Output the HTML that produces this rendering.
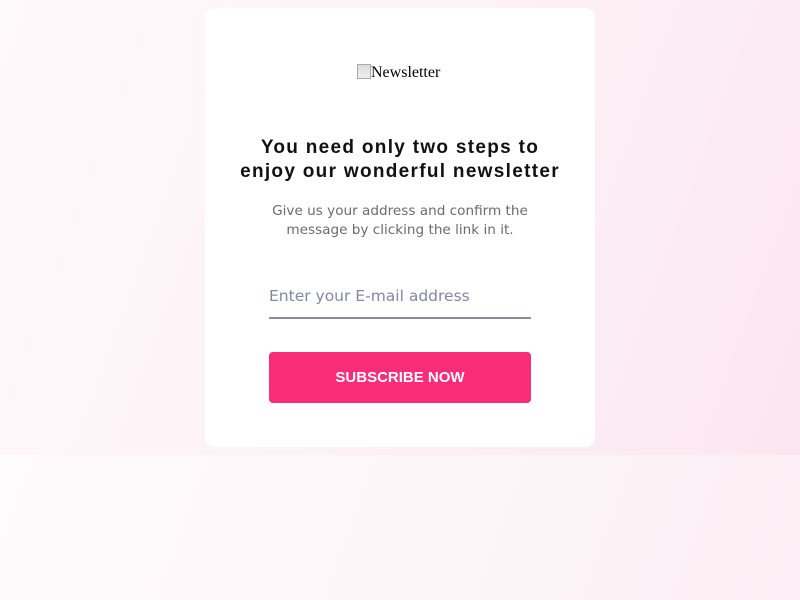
<!DOCTYPE html>
<html><head><meta charset="utf-8"><style>
html,body{margin:0;padding:0;width:800px;height:600px;overflow:hidden;background:#fdf6f9;font-family:"Liberation Sans",sans-serif}
.sec{position:absolute;left:0;top:0;width:800px;height:455px;background:linear-gradient(110deg,#fef9fb 0%,#fdf0f5 60%,#fbe6f0 100%)}
.low{position:absolute;left:0;top:455px;width:800px;height:145px;background:linear-gradient(110deg,#fefbfc 0%,#fdf5f8 60%,#fbeef4 100%)}
.card{position:absolute;left:205px;top:8px;width:390px;height:439px;background:#fff;border-radius:10px}
.img{position:absolute;left:152px;top:56px;font-family:"Liberation Serif",serif;font-size:16px;color:#000}
.img i{display:inline-block;width:14px;height:15px;vertical-align:-2px;background:linear-gradient(#ddd,#eee);border:1px solid #aaa;box-sizing:border-box}
h1{position:absolute;left:0;top:128px;width:390px;margin:0;text-align:center;font-size:19px;font-weight:bold;line-height:24px;letter-spacing:1.3px;color:#111}
p{position:absolute;left:0;top:194px;width:390px;margin:0;text-align:center;font-family:"DejaVu Sans",sans-serif;font-size:13.6px;line-height:19px;color:#6a6a72}
.in{position:absolute;left:64px;top:279px;width:262px;height:30px;border-bottom:2px solid #8a8aa0;font-family:"DejaVu Sans",sans-serif;font-size:15.5px;color:#8388a0}
.btn{position:absolute;left:64px;top:344px;width:262px;height:51px;background:#f92c7a;border-radius:4px;color:#fff;font-weight:bold;font-size:15px;text-align:center;line-height:51px}
</style></head><body>
<div class="sec"></div><div class="low"></div>
<div class="card">
<div class="img"><i></i>Newsletter</div>
<h1>You need only two steps to<br>enjoy our wonderful newsletter</h1>
<p>Give us your address and confirm the<br>message by clicking the link in it.</p>
<div class="in">Enter your E-mail address</div>
<div class="btn">SUBSCRIBE NOW</div>
</div>
</body></html>
